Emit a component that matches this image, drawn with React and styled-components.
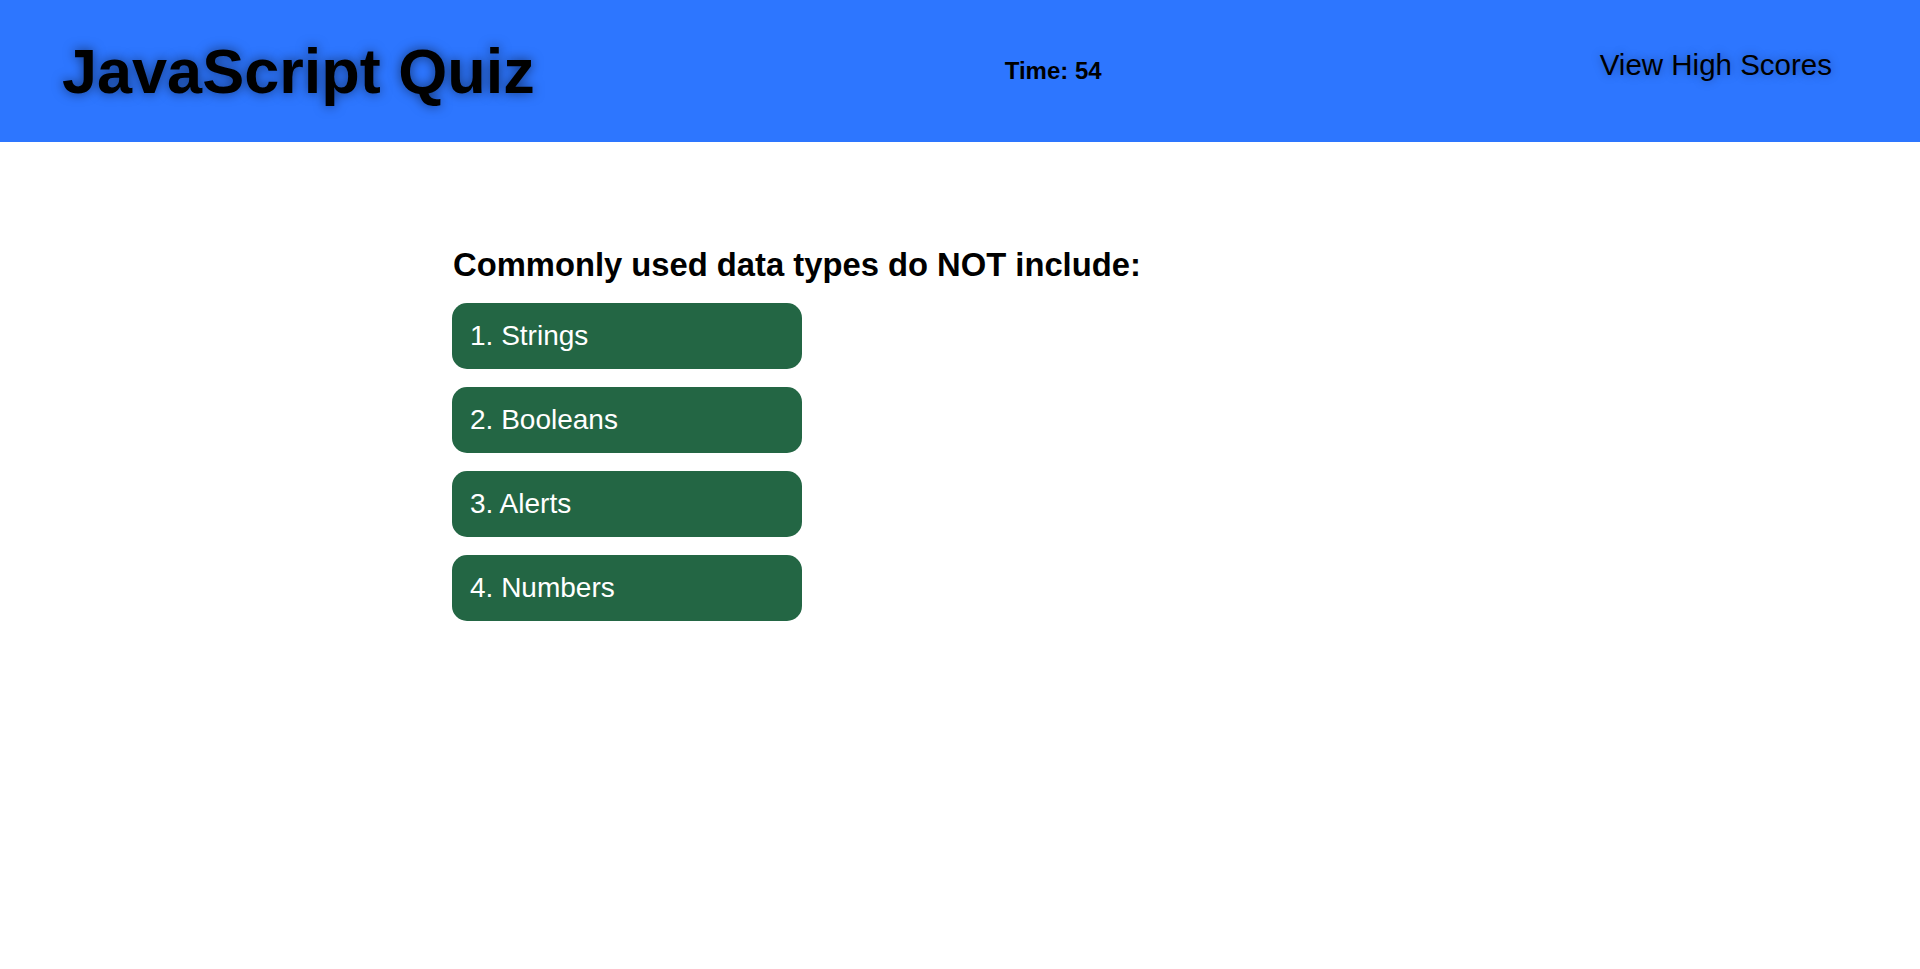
import styled, { createGlobalStyle } from "styled-components";

const GlobalStyle = createGlobalStyle`
  body {
    margin: 0;
    font-family: "Liberation Sans", Arial, sans-serif;
    background-color: white;
  }
`;

const choices = ["1. Strings", "2. Booleans", "3. Alerts", "4. Numbers"];

export default function App() {
  return (
    <>
      <GlobalStyle />
      <Header>
        <Title>JavaScript Quiz</Title>
        <Timer>Time: 54</Timer>
        <HighScores href="#">View High Scores</HighScores>
      </Header>
      <QuizContainer>
        <Question>Commonly used data types do NOT include:</Question>
        <ChoiceList>
          {choices.map((choice) => (
            <Choice key={choice}>{choice}</Choice>
          ))}
        </ChoiceList>
      </QuizContainer>
    </>
  );
}

const Header = styled.header`
  display: flex;
  align-items: center;
  justify-content: space-between;
  height: 142px;
  padding: 0 88px 0 62px;
  background-color: rgb(45, 118, 255);
`;

const Title = styled.h1`
  margin: 0;
  font-size: 63px;
  font-weight: bold;
  color: black;
  text-shadow: 0px 0px 12px rgba(0, 0, 0, 0.55);
`;

const Timer = styled.h2`
  margin: 0 28px 0 0;
  font-size: 24px;
  font-weight: bold;
  color: black;
`;

const HighScores = styled.a`
  margin-top: -12px;
  font-size: 29.5px;
  color: black;
  text-decoration: none;
  text-shadow: 0px 0px 10px rgba(0, 0, 0, 0.35);
`;

const QuizContainer = styled.main`
  display: flex;
  flex-direction: column;
  align-items: flex-start;
  padding: 104px 0 0 452px;
`;

const Question = styled.h2`
  margin: 0 0 19px 1px;
  font-size: 32.75px;
  font-weight: bold;
  color: black;
`;

const ChoiceList = styled.div`
  display: flex;
  flex-direction: column;
  gap: 18px;
`;

const Choice = styled.button`
  width: 350px;
  padding: 17px 18px;
  border: none;
  border-radius: 15px;
  background-color: rgb(35, 102, 68);
  color: white;
  font-family: "Liberation Sans", Arial, sans-serif;
  font-size: 28px;
  line-height: normal;
  text-align: left;
  cursor: pointer;
`;
